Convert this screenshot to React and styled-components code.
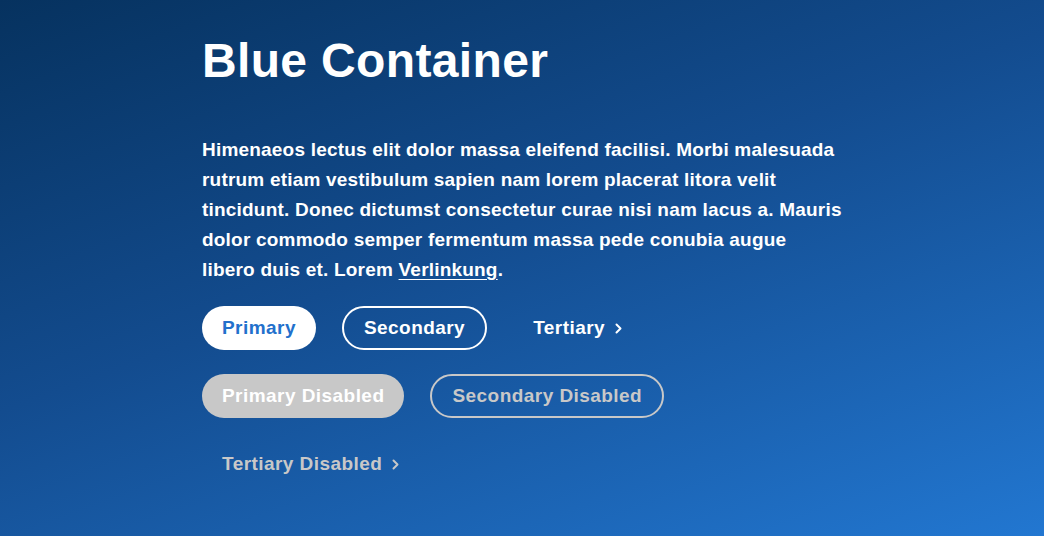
import React from 'react'
import styled, { createGlobalStyle } from 'styled-components'

const GlobalStyle = createGlobalStyle`
  html, body {
    margin: 0;
    padding: 0;
  }
  body {
    font-family: "Liberation Sans", Arial, Helvetica, sans-serif;
  }
`

const Page = styled.div`
  width: 1044px;
  height: 536px;
  overflow: hidden;
  background: linear-gradient(160deg, #06325f 0%, #134c8f 45%, #2277d1 100%);
  color: #fff;
  padding: 30px 0 0 202px;
  box-sizing: border-box;
`

const Content = styled.div`
  width: 640px;
`

const Title = styled.h1`
  margin: 0;
  font-size: 48px;
  line-height: 62px;
  font-weight: 700;
  letter-spacing: 0.35px;
`

const Text = styled.p`
  margin: 43px 0 0;
  font-size: 19px;
  line-height: 30px;
  font-weight: 700;
  letter-spacing: 0.2px;
`

const Link = styled.a`
  color: #fff;
  text-decoration: underline;
  text-underline-offset: 3px;
`

const ButtonRow = styled.div`
  display: flex;
  flex-wrap: wrap;
  align-items: center;
  gap: 24px 26px;
  margin-top: 21px;
`

const Button = styled.button`
  display: inline-flex;
  align-items: center;
  gap: 10px;
  height: 44px;
  padding: 0 20px;
  box-sizing: border-box;
  border-radius: 22px;
  font-family: inherit;
  font-size: 19px;
  font-weight: 700;
  letter-spacing: 0.45px;
  cursor: ${p => (p.disabled ? 'default' : 'pointer')};
  border: none;
  background: transparent;
  color: #fff;

  ${p => p.$variant === 'primary' && `
    background: ${p.disabled ? '#c8c8c8' : '#fff'};
    color: ${p.disabled ? '#fff' : '#2270cc'};
  `}
  ${p => p.$variant === 'secondary' && `
    border: 2px solid ${p.disabled ? '#c8c8c8' : '#fff'};
    color: ${p.disabled ? '#c8c8c8' : '#fff'};
  `}
  ${p => p.$variant === 'tertiary' && `
    color: ${p.disabled ? '#c8c8c8' : '#fff'};
  `}
`

const Chevron = () => (
  <svg width="7" height="11" viewBox="0 0 7 11" fill="none">
    <polyline points="1.5,1.5 5.5,5.5 1.5,9.5" stroke="currentColor" strokeWidth="2" strokeLinecap="round" strokeLinejoin="round" />
  </svg>
)

export default function App() {
  return (
    <Page>
      <GlobalStyle />
      <Content>
        <Title>Blue Container</Title>
        <Text>
          Himenaeos lectus elit dolor massa eleifend facilisi. Morbi malesuada
          rutrum etiam vestibulum sapien nam lorem placerat litora velit
          tincidunt. Donec dictumst consectetur curae nisi nam lacus a. Mauris
          dolor commodo semper fermentum massa pede conubia augue libero duis
          et. Lorem <Link href="#">Verlinkung</Link>.
        </Text>
        <ButtonRow>
          <Button $variant="primary">Primary</Button>
          <Button $variant="secondary">Secondary</Button>
          <Button $variant="tertiary">Tertiary <Chevron /></Button>
          <Button $variant="primary" disabled>Primary Disabled</Button>
          <Button $variant="secondary" disabled>Secondary Disabled</Button>
          <Button $variant="tertiary" disabled>Tertiary Disabled <Chevron /></Button>
        </ButtonRow>
      </Content>
    </Page>
  )
}
